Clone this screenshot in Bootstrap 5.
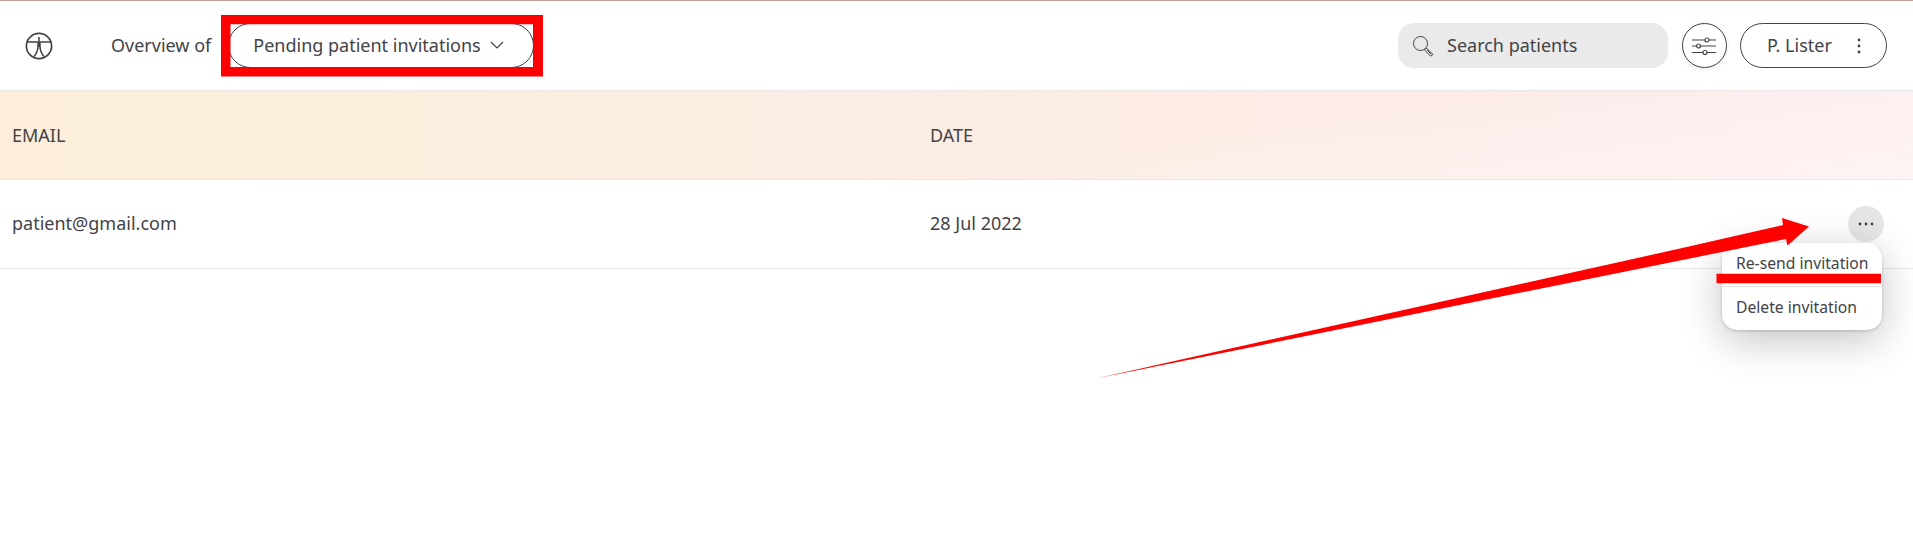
<!DOCTYPE html>
<html lang="en">
<head>
<meta charset="utf-8">
<meta name="viewport" content="width=device-width, initial-scale=1">
<title>Pending patient invitations</title>
<link href="https://cdn.jsdelivr.net/npm/bootstrap@5.3.0/dist/css/bootstrap.min.css" rel="stylesheet">
<style>
  body { font-family: "Noto Sans", sans-serif; font-size: 18px; color: #424347; line-height: 27px; }
  .topbar { height: 91px; border-top: 1px solid #c59d9a; border-bottom: 1px solid #e8e8e8; padding: 0 26px 0 24px; }
  .brand-mark { width: 87px; }
  .pill { height: 45px; border: 1px solid #424347; border-radius: 23px; color: #424347; font-size: 18px; background: #fff; }
  .overview-pill { width: 306px; margin-left: 17px; padding: 0 29px 0 24px; }
  .search-box { width: 270px; height: 45px; border-radius: 16px; background: #eaeaea; padding-left: 14px; gap: 13px; }
  .filter-btn { width: 45px; margin-left: 14px; padding: 0 1px 0 0; box-shadow: 0 1px 4px rgba(0,0,0,.1); }
  .user-pill { width: 147px; margin-left: 13px; padding: 0 23px 0 26px; }
  .table-line { padding-left: 12px; padding-right: 29px; border-bottom: 1px solid #e8e8e8; }
  .head-line { height: 89px; background: linear-gradient(172deg, rgba(255,250,240,0) 40%, rgba(255,248,246,.65) 100%) right / 1200px 100% no-repeat, linear-gradient(90deg, #fceeda 0%, #fbeedd 20%, #fbede1 40%, #fcece5 62%, #fcebea 82%, #fcecee 100%); }
  .item-line { height: 89px; }
  .item-line .cell-text { padding-bottom: 2px; }
  .col-mail { width: 918px; }
  .more-btn { width: 36px; height: 36px; background: #e6e6e6; }
  .row-menu { position: absolute; top: 37px; right: 2px; width: 160px; height: 87px; font-size: 15.7px; line-height: 24px; background: #fff; border-radius: 15px; box-shadow: 0 10px 40px rgba(0,0,0,.24), 0 1px 3px rgba(0,0,0,.18); z-index: 1000; }
  .row-menu a { height: 43px; padding: 0 0 3px 14px; color: #424347; white-space: nowrap; }
  .row-menu a + a { border-top: 1px solid #e4e4e4; height: 44px; padding-bottom: 4px; }
  .markup { position: absolute; inset: 0; z-index: 1100; pointer-events: none; }
</style>
</head>
<body class="vh-100 d-flex flex-column">
<header class="topbar d-flex align-items-center flex-shrink-0">
  <div class="brand-mark">
    <svg class="d-block" width="30" height="30" viewBox="0 0 30 30" fill="none" stroke="#424347" stroke-width="1.5"><circle cx="15" cy="15" r="12.6" stroke-width="1.7"/><path d="M3.500 11.100H26.500M15 6v10M14 12v3c0 4-1.300 7.500-4 10.500M16 12v3c0 4 1.300 7.500 4 10.500"/></svg>
  </div>
  <span>Overview of</span>
  <button class="pill overview-pill d-flex align-items-center justify-content-between" type="button">Pending patient invitations
    <svg width="14" height="9" viewBox="0 0 14 9" fill="none" stroke="#424347" stroke-width="1.2"><path d="M1 1l6 6 6-6"/></svg>
  </button>
  <div class="search-box d-flex align-items-center ms-auto">
    <svg width="22" height="24" viewBox="0 0 22 24" fill="none" stroke="#424347"><circle cx="8.500" cy="9.500" r="7"/><path d="M13 15.500l1.500-1.500L20.500 20q0 2-2 2L12.800 16.300zM15 16l4 4"/></svg>
    <span>Search patients</span>
  </div>
  <button class="pill filter-btn d-flex align-items-center justify-content-center" type="button" aria-label="Filters">
    <svg width="24" height="18" viewBox="0 0 24 18" fill="none" stroke="#424347" stroke-width="1.200"><path d="M0 3h13M17 3h7M0 9h4.500M8.500 9H24M0 15.500h11M15 15.500h9"/><circle cx="15" cy="3" r="2"/><circle cx="6.500" cy="9" r="2"/><circle cx="13" cy="15.500" r="2"/></svg>
  </button>
  <button class="pill user-pill d-flex align-items-center justify-content-between" type="button">P. Lister
    <svg width="8" height="16" viewBox="0 0 8 16" fill="#424347"><circle cx="4" cy="2" r="1.400"/><circle cx="4" cy="8" r="1.400"/><circle cx="4" cy="14" r="1.400"/></svg>
  </button>
</header>
<main class="flex-grow-1">
  <div class="table-line head-line d-flex align-items-center"><div class="col-mail">EMAIL</div><div>DATE</div></div>
  <div class="table-line item-line d-flex align-items-center">
    <div class="col-mail cell-text">patient@gmail.com</div><div class="cell-text">28 Jul 2022</div>
    <div class="position-relative ms-auto">
      <button class="more-btn btn rounded-circle border-0 p-0 d-flex align-items-center justify-content-center" type="button" aria-label="More">
        <svg width="16" height="4" viewBox="0 0 16 4" fill="#424347"><circle cx="2" cy="2" r="1.400"/><circle cx="8" cy="2" r="1.400"/><circle cx="14" cy="2" r="1.400"/></svg>
      </button>
      <div class="row-menu">
        <a class="d-flex align-items-center text-decoration-none" href="#">Re-send invitation</a>
        <a class="d-flex align-items-center text-decoration-none" href="#">Delete invitation</a>
      </div>
    </div>
  </div>
</main>
<!-- Hand-drawn callouts lying over the page -->
<svg class="markup" width="1913" height="543" viewBox="0 0 1913 543" fill="#f00">
  <path fill-rule="evenodd" d="M221 15H543V76.500H221zM230.500 24.300V67H533V24.300z"/>
  <path d="M1096 378.500L1680 248.500L1783 225L1782 218L1809 226.500L1787.500 245.500L1786 239L1680 260.500z"/>
  <path d="M1716.500 273.700H1881V283.300H1716.500z"/>
</svg>
<script src="https://cdn.jsdelivr.net/npm/bootstrap@5.3.0/dist/js/bootstrap.bundle.min.js"></script>
</body>
</html>
